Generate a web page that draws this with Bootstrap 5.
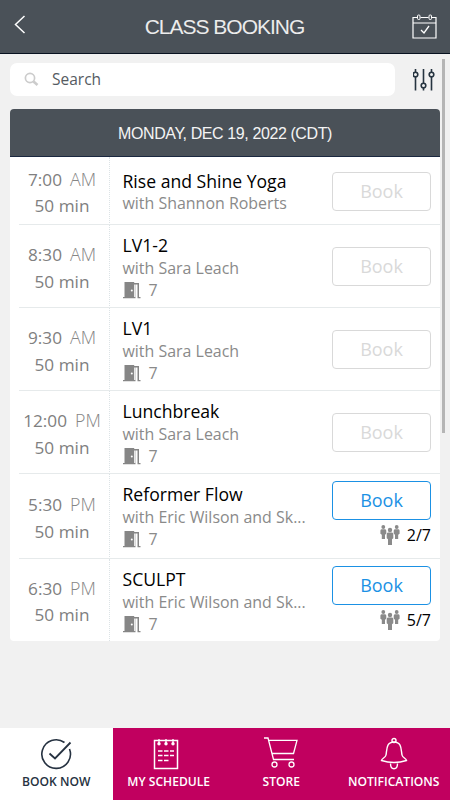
<!DOCTYPE html>
<html lang="en">
<head>
<meta charset="utf-8">
<meta name="viewport" content="width=device-width, initial-scale=1">
<title>Class Booking</title>
<link href="https://cdn.jsdelivr.net/npm/bootstrap@5.3.0/dist/css/bootstrap.min.css" rel="stylesheet">
<style>
body{font-family:"Open Sans",sans-serif;background:#f1f1f1;height:800px;overflow:hidden;color:#000}
svg{display:block;flex:none}
.topbar{height:54px;background:#4a5158;border-bottom:1px solid #07111f;padding:0 13px 0 14px}
.topbar h1{font:300 21px/54px "Liberation Sans",sans-serif;letter-spacing:-1px;color:#ececec;padding:1px 0 0 11px}
.search-row{padding:9px 15px 0 10px;height:55px}
.search-box{width:385px;height:33px;background:#fff;border-radius:7px;padding-left:14px;font-size:15.5px;color:#555b62;gap:13px}
.schedule{margin:0 10px;width:430px;border-radius:4px;overflow:hidden;background:#fff}
.day{height:48px;background:#4a5158;border-bottom:1px solid #1b2840;color:#f4f4f4;font:16px/49px "Liberation Sans",sans-serif;letter-spacing:-.4px}
.slot{height:83px;position:relative}
.slot.first{height:68px}
.slot.tall{height:85px}
.slot.last{height:82px}
.slot:not(.last)::after{content:"";position:absolute;left:9px;right:0;bottom:0;height:1px;background:#e6eaeb}
.when{width:100px;border-right:1px dotted #dce3e6;padding:3px 0 0 5px;color:#808080;font-size:17.2px;line-height:26.5px;font-weight:400}
.when span{color:#858585;margin-left:8px;font-size:17.8px;font-weight:300}
.what{width:222px;padding:8px 0 0 12.5px;line-height:22px;color:#8a8a8a;font-size:15.95px}
.first .what{padding-top:12px}
.what h2{font-size:17.6px;line-height:24px;margin:0;color:#000;font-weight:400}
.first .what div{line-height:20px}
.room{gap:8px}
.act{width:99px}
.book{height:39px;width:99px;border:1px solid #d9d9d9;border-radius:4px;color:#d9d9d9;font-size:18px;padding:0;line-height:35px;background:#fff}
.act.pt-2{padding-top:7px!important}
.book.open{border-color:#1b91e4;color:#1b91e4}
.spots{gap:7px;font-size:16px;line-height:22px;margin-top:4px}
.scrollbar-thumb{position:absolute;left:442px;top:59px;width:3px;height:374px;background:#b5b5b5}
.tabs{height:72px;background:#c1005f;color:#fff}
.tabs a{width:112.5px;color:inherit;text-decoration:none;font-size:12.1px;font-weight:600;line-height:18px;padding-top:9px;white-space:nowrap}
.tabs svg{height:36px;width:36px;overflow:visible}
.tabs a.current{background:#fff;color:#263241}
</style>
</head>
<body class="d-flex flex-column">
<svg class="d-none">
<symbol id="door" viewBox="0 0 18 17"><path d="M1.500 0h9.700v15h1V2.500H11V1h5v14h1.500v1.200h-3V2.500h-2v13.700H0V15h1.500z" fill="#868686"/><circle cx="8.800" cy="8.500" r="1" fill="#fff"/></symbol>
<symbol id="people" viewBox="0 0 20 20"><g fill="#8a8a8a"><circle cx="3.300" cy="2" r="1.900"/><path d="M1.500 4.200h3.600q1.200.3 1.200 1.500v3L5 9.700v4.300H1.800V9.700L.4 8.700v-3q0-1.200 1.100-1.500z"/><circle cx="16.700" cy="2" r="1.900"/><path d="M14.900 4.200h3.600q1.100.3 1.100 1.500v3l-1.400 1V14H15V9.700l-1.300-1v-3q0-1.200 1.200-1.500z"/><circle cx="10" cy="5" r="2.200"/><path d="M8 7.500h4q1.300.4 1.300 1.700v4L12 14.200V20H8v-5.800l-1.300-1v-4Q6.700 7.900 8 7.500z"/></g></symbol>
</svg>
<header class="topbar d-flex align-items-center justify-content-between flex-shrink-0">
<svg width="12" height="19" viewBox="0 0 12 19" class="mb-1" fill="none" stroke="#fff" stroke-width="1.500"><path d="M10.500 1 1.500 9.500l9 8.500"/></svg>
<h1 class="m-0">CLASS BOOKING</h1>
<svg width="25" height="26" viewBox="0 0 25 26" fill="none" stroke="#fff"><path d="M5 3.500H1v20.500h23V3.500h-4M8.500 3.500h8M1 9h23" stroke-width="1.200"/><rect x="5.500" y="1" width="2.500" height="4.500" rx="1"/><rect x="17" y="1" width="2.500" height="4.500" rx="1"/><path d="m9 16 3 3 5-7" stroke-width="1.300"/></svg>
</header>
<div class="search-row d-flex align-items-start justify-content-between flex-shrink-0">
<div class="search-box d-flex align-items-center"><svg width="15" height="15" viewBox="0 0 15 15" fill="none" stroke="#ccc"><circle cx="6" cy="6" r="4.600" stroke-width="1.700"/><path d="m9.500 9.500 4 3.500" stroke-width="2.600"/></svg><span>Search</span></div>
<svg width="22" height="24" viewBox="0 0 22 24" class="mt-1" fill="none" stroke="#263440" stroke-width="1.600"><path d="M2.500 2v3M2.500 10v13.500M10.500 2v14.500M10.500 21v2.500M18.500 2v3M18.500 10v13.500"/><circle cx="2.500" cy="7.500" r="2.300"/><circle cx="10.500" cy="18.500" r="2.300"/><circle cx="18.500" cy="7.500" r="2.300"/></svg>
</div>
<main class="schedule flex-shrink-0">
<div class="day text-center">MONDAY, DEC 19, 2022 (CDT)</div>
<section class="slot first d-flex"><div class="when d-flex flex-column justify-content-center text-center"><div>7:00<span>AM</span></div><div>50 min</div></div><div class="what"><h2>Rise and Shine Yoga</h2><div>with Shannon Roberts</div></div><div class="act d-flex align-items-center"><button class="btn book">Book</button></div></section>
<section class="slot d-flex"><div class="when d-flex flex-column justify-content-center text-center"><div>8:30<span>AM</span></div><div>50 min</div></div><div class="what"><h2>LV1-2</h2><div>with Sara Leach</div><div class="room d-flex align-items-center"><svg width="18" height="17"><use href="#door"/></svg>7</div></div><div class="act d-flex align-items-center"><button class="btn book">Book</button></div></section>
<section class="slot d-flex"><div class="when d-flex flex-column justify-content-center text-center"><div>9:30<span>AM</span></div><div>50 min</div></div><div class="what"><h2>LV1</h2><div>with Sara Leach</div><div class="room d-flex align-items-center"><svg width="18" height="17"><use href="#door"/></svg>7</div></div><div class="act d-flex align-items-center"><button class="btn book">Book</button></div></section>
<section class="slot d-flex"><div class="when d-flex flex-column justify-content-center text-center"><div>12:00<span>PM</span></div><div>50 min</div></div><div class="what"><h2>Lunchbreak</h2><div>with Sara Leach</div><div class="room d-flex align-items-center"><svg width="18" height="17"><use href="#door"/></svg>7</div></div><div class="act d-flex align-items-center"><button class="btn book">Book</button></div></section>
<section class="slot tall d-flex"><div class="when d-flex flex-column justify-content-center text-center"><div>5:30<span>PM</span></div><div>50 min</div></div><div class="what"><h2>Reformer Flow</h2><div>with Eric Wilson and Sk...</div><div class="room d-flex align-items-center"><svg width="18" height="17"><use href="#door"/></svg>7</div></div><div class="act pt-2"><button class="btn book open">Book</button><div class="spots d-flex justify-content-end align-items-center"><svg width="20" height="20"><use href="#people"/></svg>2/7</div></div></section>
<section class="slot last d-flex"><div class="when d-flex flex-column justify-content-center text-center"><div>6:30<span>PM</span></div><div>50 min</div></div><div class="what"><h2>SCULPT</h2><div>with Eric Wilson and Sk...</div><div class="room d-flex align-items-center"><svg width="18" height="17"><use href="#door"/></svg>7</div></div><div class="act pt-2"><button class="btn book open">Book</button><div class="spots d-flex justify-content-end align-items-center"><svg width="20" height="20"><use href="#people"/></svg>5/7</div></div></section>
</main>
<div class="scrollbar-thumb"></div>
<nav class="tabs d-flex mt-auto flex-shrink-0">
<a href="#" class="current d-flex flex-column align-items-center"><svg viewBox="0 0 36 36" fill="none" stroke="currentColor" stroke-width="1.600"><path d="M26.500 5.500A14.300 14.300 0 1 0 31.500 12"/><path d="m11.500 16.500 5.500 5L32.500 5.500" stroke-width="1.800"/></svg><span>BOOK NOW</span></a>
<a href="#" class="d-flex flex-column align-items-center"><svg viewBox="0 0 36 36" fill="none" stroke="currentColor" stroke-width="1.500"><path d="M3.500 3.500h23v28h-23z"/><path d="M8 2v5M15 2v5M22 2v5" stroke-width="1.300"/><g fill="currentColor" stroke="none"><circle cx="8" cy="6.800" r="1.700"/><circle cx="15" cy="6.800" r="1.700"/><circle cx="22" cy="6.800" r="1.700"/></g><path d="M7 14h4.500m1.500 0h4.500m1.500 0h4M7 18.500h4.500m1.500 0h4.500m1.500 0h4M7 23.500h4.500m1.500 0h4.500"/></svg><span>MY SCHEDULE</span></a>
<a href="#" class="d-flex flex-column align-items-center"><svg viewBox="0 0 36 36" fill="none" stroke="currentColor" stroke-width="1.300"><path d="M1 1h4L10.500 22.500h20.500M5.500 3.300h28.500L30.500 16.500H9"/><circle cx="11.500" cy="27.500" r="2.500"/><circle cx="28.500" cy="27.500" r="2.500"/></svg><span>STORE</span></a>
<a href="#" class="d-flex flex-column align-items-center"><svg viewBox="0 0 36 36" fill="none" stroke="currentColor" stroke-width="1.400"><path d="M18 5c-8 0-7 8-8 13-.5 3-4 3-4.500 5.500q12.500 4 25 0c-.5-2.500-4-2.500-4.500-5.500-1-5 0-13-8-13z"/><circle cx="18" cy="3.500" r="2"/><path d="M14.500 26.500c0 7 7 7 7 0"/></svg><span>NOTIFICATIONS</span></a>
</nav>
<script src="https://cdn.jsdelivr.net/npm/bootstrap@5.3.0/dist/js/bootstrap.bundle.min.js"></script>
</body>
</html>
